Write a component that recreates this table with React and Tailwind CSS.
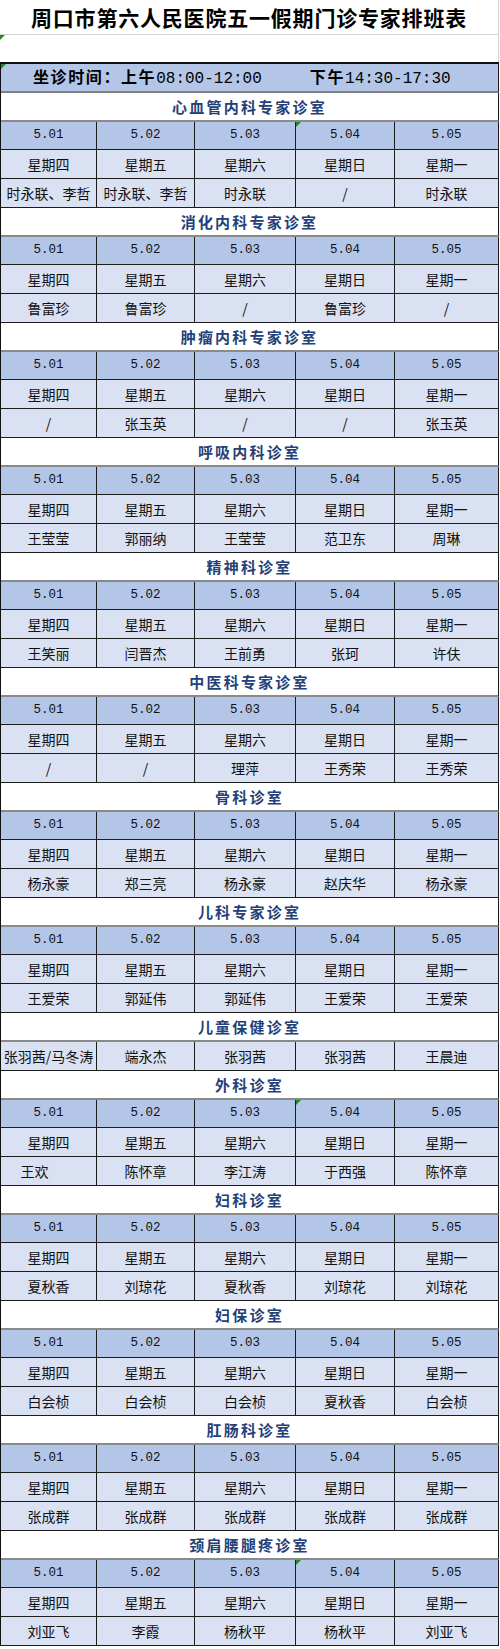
import React from "react";

const CJK = { fontFamily: '"Noto Sans CJK SC", "Noto Sans", sans-serif' };
const MONO = { fontFamily: '"Liberation Mono", "DejaVu Sans Mono", monospace' };

const DATES = ["5.01", "5.02", "5.03", "5.04", "5.05"];
const DAYS = ["星期四", "星期五", "星期六", "星期日", "星期一"];

const SECTIONS = [
  { title: "心血管内科专家诊室", names: ["时永联、李哲", "时永联、李哲", "时永联", "/", "时永联"], mark: [3] },
  { title: "消化内科专家诊室", names: ["鲁富珍", "鲁富珍", "/", "鲁富珍", "/"] },
  { title: "肿瘤内科专家诊室", names: ["/", "张玉英", "/", "/", "张玉英"] },
  { title: "呼吸内科诊室", names: ["王莹莹", "郭丽纳", "王莹莹", "范卫东", "周琳"] },
  { title: "精神科诊室", names: ["王笑丽", "闫晋杰", "王前勇", "张珂", "许伕"] },
  { title: "中医科专家诊室", names: ["/", "/", "理萍", "王秀荣", "王秀荣"] },
  { title: "骨科诊室", names: ["杨永豪", "郑三亮", "杨永豪", "赵庆华", "杨永豪"] },
  { title: "儿科专家诊室", names: ["王爱荣", "郭延伟", "郭延伟", "王爱荣", "王爱荣"] },
  { title: "儿童保健诊室", names: ["张羽茜/马冬涛", "端永杰", "张羽茜", "张羽茜", "王晨迪"], short: true },
  { title: "外科诊室", names: ["王欢", "陈怀章", "李江涛", "于西强", "陈怀章"], mark: [3], shiftFirst: true },
  { title: "妇科诊室", names: ["夏秋香", "刘琼花", "夏秋香", "刘琼花", "刘琼花"] },
  { title: "妇保诊室", names: ["白会桢", "白会桢", "白会桢", "夏秋香", "白会桢"] },
  { title: "肛肠科诊室", names: ["张成群", "张成群", "张成群", "张成群", "张成群"] },
  { title: "颈肩腰腿疼诊室", names: ["刘亚飞", "李霞", "杨秋平", "杨秋平", "刘亚飞"], mark: [3] },
];

function Mark() {
  return (
    <svg className="absolute left-0 top-0" width="5" height="5" viewBox="0 0 5 5">
      <polygon points="0,0 5,0 0,5" fill="#1f8a1f" />
    </svg>
  );
}

function Row({ h, bg, items, mono, marks = [], shiftFirst }) {
  return (
    <div className={`grid grid-cols-[96px_98px_101px_99px_104px] ${h}`}>
      {items.map((t, i) => (
        <div
          key={i}
          className={`relative flex items-center justify-center border-r border-b border-[#1c1c1c] ${bg} text-[#111] overflow-hidden whitespace-nowrap ${shiftFirst && i === 0 ? "pr-[28px]" : ""}`}
        >
          {marks.includes(i) && <Mark />}
          <span
            className={mono ? "text-[12.5px] leading-none" : "text-[14px] leading-none"}
            style={mono ? MONO : CJK}
          >
            {t}
          </span>
        </div>
      ))}
    </div>
  );
}

function SectionTitle({ title }) {
  return (
    <div className="flex h-[29px] items-center justify-center border-r border-b-2 border-r-[#1c1c1c] border-b-[#8a8a8a] bg-white">
      <span className="text-[15px] font-bold leading-none tracking-[2.2px] text-[#253f78]" style={CJK}>
        {title}
      </span>
    </div>
  );
}

export default function App() {
  return (
    <div className="w-[500px] bg-white" style={CJK}>
      <div className="flex h-[35px] w-[499px] items-center justify-center border-b border-r border-[#d4d4d4]">
        <span className="text-[21px] font-bold leading-none tracking-[0.8px] text-black">
          周口市第六人民医院五一假期门诊专家排班表
        </span>
      </div>
      <div className="relative h-[27px] w-[499px] border-r border-[#d4d4d4]">
        <Mark />
      </div>
      <div className="w-[499px] border-l border-[#111]">
        <div className="relative flex h-[31px] items-center border-t-2 border-r border-b-2 border-t-[#111] border-r-[#1c1c1c] border-b-[#7f7f7f] bg-[#b4c6e7] pl-[32px] text-black">
          <Mark />
          <span className="text-[16px] font-semibold leading-none tracking-[1.6px]">
            坐诊时间：上午<span style={MONO} className="text-[16px] font-normal tracking-[0px]">08:00-12:00</span>
          </span>
          <span className="ml-[48px] text-[16px] font-semibold leading-none tracking-[1.6px]">
            下午<span style={MONO} className="text-[16px] font-normal tracking-[0px]">14:30-17:30</span>
          </span>
        </div>
        {SECTIONS.map((s, idx) => (
          <div key={idx}>
            <SectionTitle title={s.title} />
            {!s.short && <Row h="h-[28px]" bg="bg-[#b4c6e7]" items={DATES} mono marks={s.mark || []} />}
            {!s.short && <Row h="h-[29px]" bg="bg-[#d9e1f2]" items={DAYS} />}
            <Row h="h-[29px]" bg="bg-[#d9e1f2]" items={s.names} shiftFirst={s.shiftFirst} />
          </div>
        ))}
      </div>
    </div>
  );
}
